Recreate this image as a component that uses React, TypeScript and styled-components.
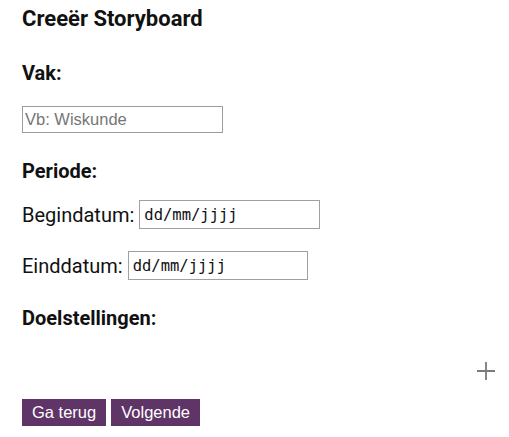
import React from 'react';
import styled, { createGlobalStyle } from 'styled-components';

const GlobalStyle = createGlobalStyle`
  body {
    margin: 0;
    background: #fff;
    font-family: Roboto, "Noto Sans", sans-serif;
    color: #111;
  }
`;

const Page = styled.div`
  display: flex;
  flex-direction: column;
  padding: 6px 13px 0 22px;
`;

const Title = styled.h2`
  margin: 0;
  font-size: 22px;
  line-height: 26px;
  font-weight: 700;
`;

const Label = styled.h3<{ $top: number }>`
  margin: ${({ $top }) => $top}px 0 0;
  font-size: 20px;
  line-height: 24px;
  font-weight: 700;
`;

const TextInput = styled.input`
  box-sizing: border-box;
  margin-top: 21px;
  width: 201px;
  height: 27px;
  padding: 0 2px;
  border: 1px solid #9c9c9c;
  font-family: "Liberation Sans", Arial, sans-serif;
  font-size: 16.5px;
  color: #222;
  outline: none;
  &::placeholder {
    color: #767676;
  }
`;

const DateRow = styled.div<{ $top: number }>`
  display: flex;
  align-items: center;
  gap: 5px;
  margin-top: ${({ $top }) => $top}px;
  height: 29px;
`;

const DateLabel = styled.label`
  font-size: 20px;
  line-height: 24px;
  font-weight: 400;
`;

const DateInput = styled.input<{ $width: number }>`
  box-sizing: border-box;
  width: ${({ $width }) => $width}px;
  height: 29px;
  padding: 0 4px;
  border: 1px solid #a0a0a0;
  font-family: "DejaVu Sans Mono", monospace;
  font-size: 15.5px;
  color: #111;
  outline: none;
`;

const AddRow = styled.div`
  display: flex;
  justify-content: flex-end;
  margin-top: 31px;
`;

const AddButton = styled.button`
  display: flex;
  align-items: center;
  justify-content: center;
  width: 20px;
  height: 20px;
  padding: 0;
  border: none;
  background: none;
  cursor: pointer;
`;

const ButtonRow = styled.div`
  display: flex;
  gap: 5px;
  margin-top: 18px;
`;

const NavButton = styled.button`
  height: 27px;
  padding: 0 10px;
  border: none;
  background: #5f3467;
  color: #fff;
  font-family: "Liberation Sans", Arial, sans-serif;
  font-size: 16.5px;
  cursor: pointer;
`;

const PlusIcon = () => (
  <svg width="20" height="20" viewBox="0 0 20 20">
    <path d="M10 1v18M1 10h18" stroke="#7a7a7a" strokeWidth="1.8" />
  </svg>
);

const App: React.FC = () => (
  <Page>
    <GlobalStyle />
    <Title>Creeër Storyboard</Title>
    <Label $top={29}>Vak:</Label>
    <TextInput placeholder="Vb: Wiskunde" />
    <Label $top={26}>Periode:</Label>
    <DateRow $top={17}>
      <DateLabel>Begindatum:</DateLabel>
      <DateInput $width={181} defaultValue="dd/mm/jjjj" />
    </DateRow>
    <DateRow $top={22}>
      <DateLabel>Einddatum:</DateLabel>
      <DateInput $width={180} defaultValue="dd/mm/jjjj" />
    </DateRow>
    <Label $top={26}>Doelstellingen:</Label>
    <AddRow>
      <AddButton aria-label="Doelstelling toevoegen">
        <PlusIcon />
      </AddButton>
    </AddRow>
    <ButtonRow>
      <NavButton>Ga terug</NavButton>
      <NavButton>Volgende</NavButton>
    </ButtonRow>
  </Page>
);

export default App;
